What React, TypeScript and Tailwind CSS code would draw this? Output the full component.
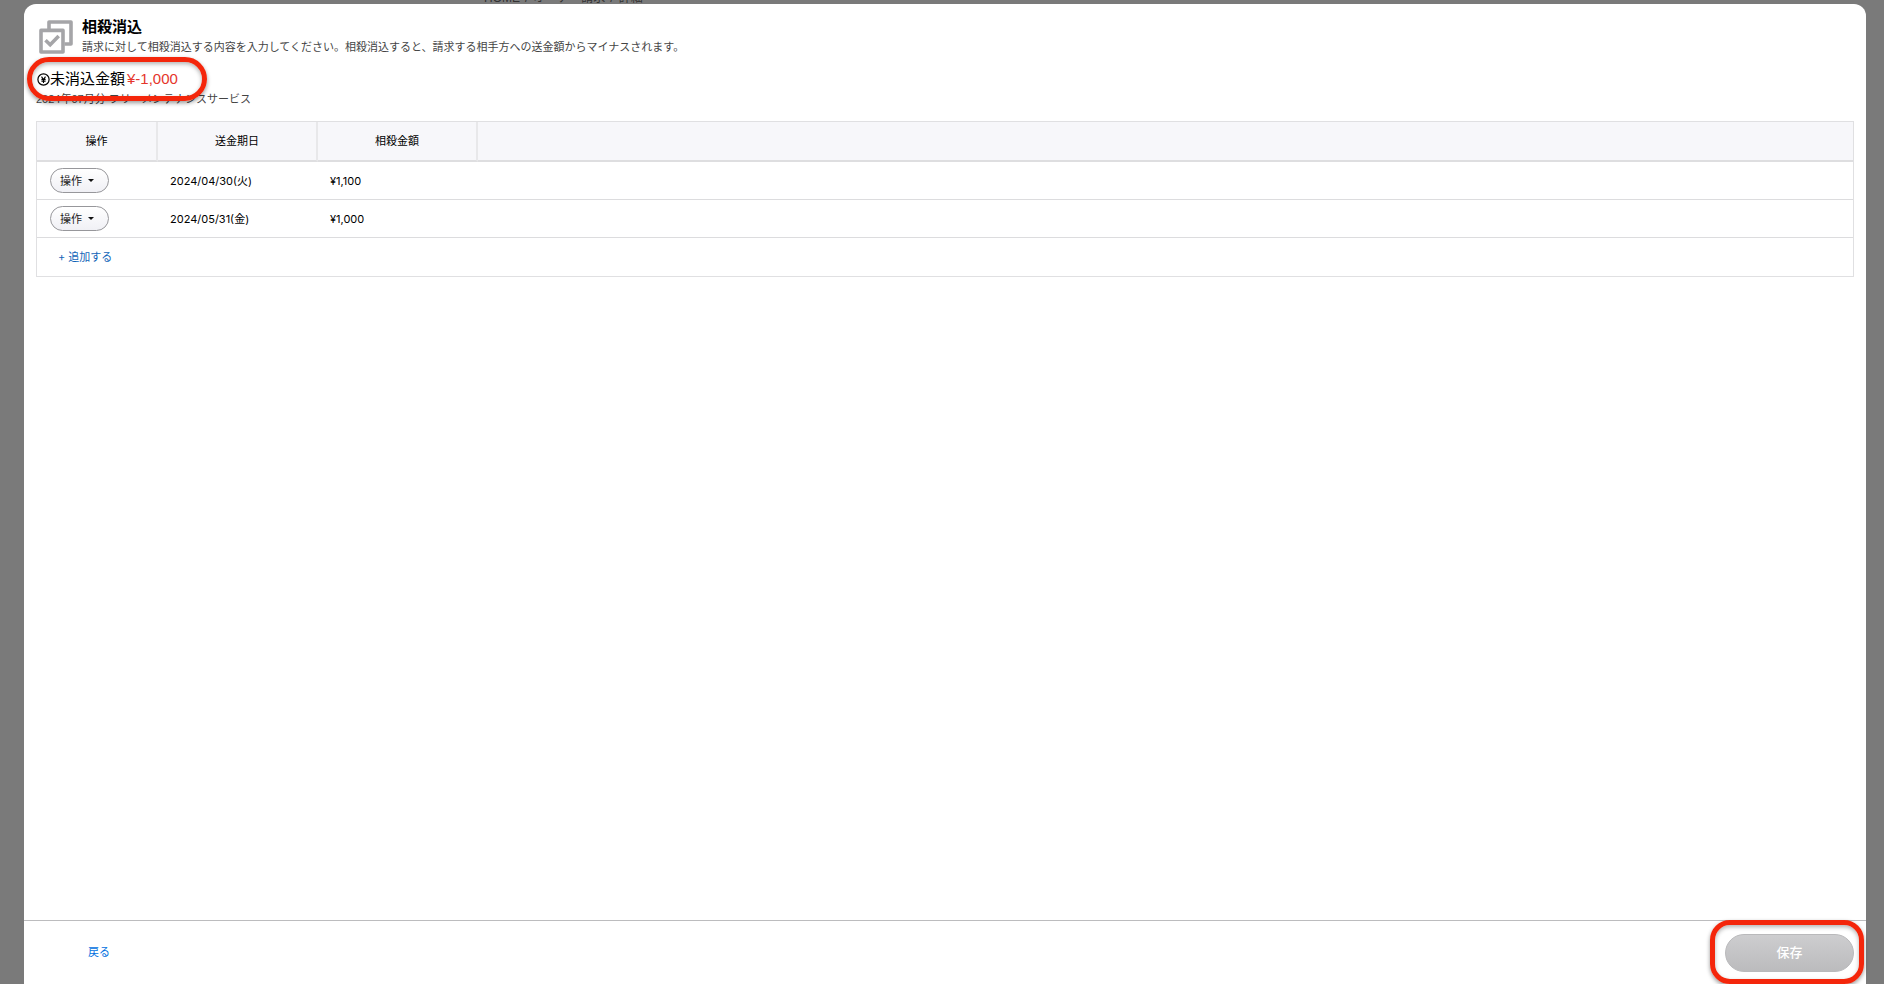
const rows = [
  { date: "2024/04/30(火)", amount: "¥1,100" },
  { date: "2024/05/31(金)", amount: "¥1,000" },
];

function StackCheckIcon() {
  return (
    <svg aria-hidden="true" viewBox="0 0 34 34" className="size-[34px] shrink-0" fill="none" stroke="#a5a5a8" strokeWidth="3.6" strokeLinejoin="round">
      <path d="M10 9.5V2h22v22h-6.5" />
      <rect x="2" y="10.4" width="22" height="21.6" />
      <path d="M6.5 20.3l4.7 4.5 8.5-8.7" strokeLinejoin="miter" />
    </svg>
  );
}

function YenIcon() {
  return (
    <svg aria-hidden="true" viewBox="0 0 13 13" className="size-[13px] shrink-0" fill="none" stroke="#000">
      <circle cx="6.5" cy="6.5" r="5.6" strokeWidth="1.2" />
      <path d="M4.5 3.6l2 2.9 2-2.9M6.5 6.5v3.4M4.4 6.4h4.2M4.4 8.1h4.2" strokeWidth="1.1" />
    </svg>
  );
}

function ActionButton() {
  return (
    <button
      type="button"
      aria-haspopup="menu"
      className="flex h-[25px] w-[59px] items-center gap-1.5 rounded-full border border-[#97979b] bg-linear-to-b from-white to-[#f0f0f5] pl-[9px] text-[11px] text-[#222]"
    >
      操作
      <svg aria-hidden="true" viewBox="0 0 6 3" className="h-[3px] w-[6px]">
        <path d="M0 0h6L3 3z" fill="#111" />
      </svg>
    </button>
  );
}

export default function App() {
  return (
    <div className="flex min-h-screen flex-col bg-[#7a7a7a] pr-[18px] pl-6 font-['Inter','Noto_Sans_CJK_JP',sans-serif] text-[11px] leading-4 text-black">
      <nav className="flex h-1 items-end gap-[5px] overflow-hidden pl-[460px] font-['Liberation_Sans','Noto_Sans_CJK_JP',sans-serif] text-xs leading-3 whitespace-nowrap text-[#333]">
        <span>HOME</span>
        <span>/</span>
        <span>オーナー請求</span>
        <span>/</span>
        <span>詳細</span>
      </nav>
      <main className="flex grow flex-col rounded-t-xl bg-white">
        <div className="grow px-3 pt-[13px]">
          <header className="flex gap-[9px] pl-[3px]">
            <div className="pt-[3px]">
              <StackCheckIcon />
            </div>
            <div>
              <h1 className="text-[15px] leading-5 font-bold">相殺消込</h1>
              <p className="leading-5 text-[#444]">
                請求に対して相殺消込する内容を入力してください。相殺消込すると、請求する相手方への送金額からマイナスされます。
              </p>
            </div>
          </header>

          <section className="relative pt-3 font-['Liberation_Sans','Noto_Sans_CJK_JP',sans-serif]">
            <h2 className="flex items-center pl-px text-[15px] leading-5">
              <YenIcon />
              <span>未消込金額</span>
              <span className="ml-0.5 text-[#e5352b]">¥-1,000</span>
            </h2>
            <p className="leading-5 text-[#444]">2024年07月分 フリーメンテナンスサービス</p>
            <div
              aria-hidden="true"
              className="pointer-events-none absolute top-0 -left-[9px] h-11 w-[180px] rounded-[22px] border-[5px] border-[#f4260b] shadow-[0_2px_4px_rgba(0,0,0,0.4),inset_0_2px_4px_rgba(0,0,0,0.3)]"
            />
          </section>

          <table className="mt-3 w-full table-fixed border-separate border-spacing-0 border border-[#e0e0e2]">
            <thead>
              <tr className="h-10 bg-[#f7f7fa]">
                <th scope="col" className="w-[121px] border-r-2 border-b-2 border-r-[#e8e8ea] border-b-[#dedee0] font-normal">操作</th>
                <th scope="col" className="w-[160px] border-r-2 border-b-2 border-r-[#e8e8ea] border-b-[#dedee0] font-normal">送金期日</th>
                <th scope="col" className="w-[160px] border-r-2 border-b-2 border-r-[#e8e8ea] border-b-[#dedee0] font-normal">相殺金額</th>
                <td className="border-b-2 border-[#dedee0]" />
              </tr>
            </thead>
            <tbody>
              {rows.map((row) => (
                <tr key={row.date} className="h-[38px]">
                  <td className="border-b border-[#dcdcde] pl-[13px]">
                    <ActionButton />
                  </td>
                  <td className="border-b border-[#dcdcde] pl-3">{row.date}</td>
                  <td className="border-b border-[#dcdcde] pl-3">{row.amount}</td>
                  <td className="border-b border-[#dcdcde]" />
                </tr>
              ))}
              <tr className="h-[38px]">
                <td colSpan={4} className="pl-[21px]">
                  <button type="button" className="text-[#1266b8]">+ 追加する</button>
                </td>
              </tr>
            </tbody>
          </table>
        </div>

        <footer className="flex h-16 items-center justify-between border-t border-[#bcbcbe] pr-3 pl-16">
          <a href="#back" className="pb-0.5 text-[#0070e0]">戻る</a>
          <div className="relative">
            <button
              type="button"
              disabled
              className="h-[38px] w-[129px] rounded-full border border-[#b9b9bb] bg-linear-to-b from-[#cdcdcf] to-[#bbbbbd] pb-0.5 text-[13px] font-medium text-white"
            >
              保存
            </button>
            <div
              aria-hidden="true"
              className="pointer-events-none absolute -top-[14px] -right-[10px] -bottom-3 -left-[15px] rounded-[20px] border-[5px] border-[#f4260b] shadow-[0_2px_4px_rgba(0,0,0,0.4),inset_0_2px_4px_rgba(0,0,0,0.3)]"
            />
          </div>
        </footer>
      </main>
    </div>
  );
}
